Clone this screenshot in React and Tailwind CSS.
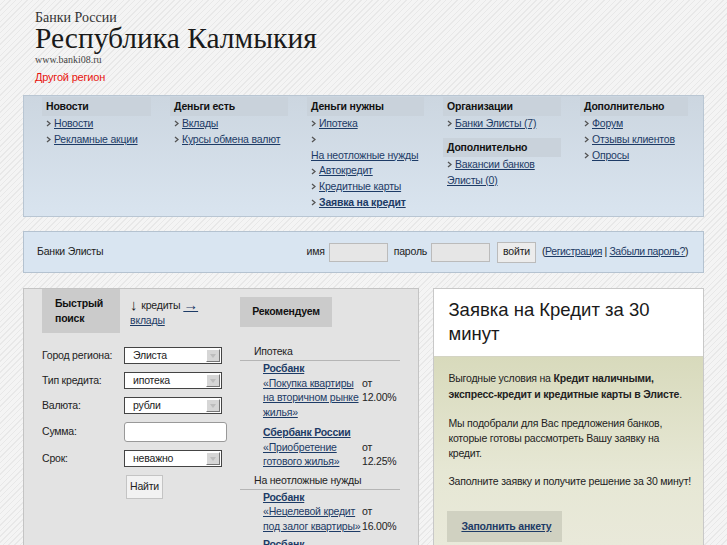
import React from 'react';

const Chev = () => (
  <svg width="5" height="7" viewBox="0 0 5 7" className="inline-block mr-[3px] mb-[1px]">
    <path d="M1 1 L4 3.5 L1 6" fill="none" stroke="#555" strokeWidth="1.3" />
  </svg>
);

const NavLink = ({ children, bold }) => (
  <div className="leading-[15.8px] whitespace-nowrap">
    <Chev />
    <a className={`underline text-[#1d3b66] ${bold ? 'font-bold' : ''}`}>{children}</a>
  </div>
);

const NavHead = ({ children }) => (
  <div className="h-[19px] bg-[#c9d2db] pl-[4px] font-bold leading-[19px] text-[#111]">{children}</div>
);

const Select = ({ value }) => (
  <div className="w-[98px] h-[17px] border border-[#444] bg-white flex items-center">
    <span className="flex-1 pl-[8px] leading-none text-[#222]">{value}</span>
    <div className="w-[14px] h-[13px] mr-[1px] bg-[#d6d6d6] border-t border-l border-white border-r border-b border-r-[#777] border-b-[#777] flex items-center justify-center">
      <svg width="6" height="4" viewBox="0 0 6 4"><path d="M0 0 L6 0 L3 4 Z" fill="#bdbdbd" /></svg>
    </div>
  </div>
);

const Offer = ({ bank, lines, rate }) => (
  <div className="pl-[23px]">
    <a className="block font-bold underline text-[#1d3b66] leading-[14.5px]">{bank}</a>
    <div className="flex">
      <div className="w-[99px]">
        {lines.map((l, i) => (
          <a key={i} className="block underline text-[#1d3b66] leading-[14.5px] whitespace-nowrap">{l}</a>
        ))}
      </div>
      <div className="leading-[14.5px] text-[#222] whitespace-nowrap">
        <div>{rate ? 'от' : ''}</div>
        <div>{rate}</div>
      </div>
    </div>
  </div>
);

export default function App() {
  return (
    <div
      className="w-[727px] h-[545px] overflow-hidden bg-[repeating-linear-gradient(135deg,#f4f4f4_0px,#f4f4f4_3px,#e8e8e8_3px,#e8e8e8_4px)] text-[10.5px] tracking-[-0.2px] text-[#222]"
      style={{ fontFamily: '"Liberation Sans", Arial, sans-serif' }}
    >
      {/* header */}
      <div className="pl-[35px] pt-[10px] tracking-normal" style={{ fontFamily: '"Liberation Serif", "Times New Roman", serif' }}>
        <div className="text-[14px] leading-[15px] text-[#333]">Банки России</div>
        <div className="text-[29.5px] leading-[26px] text-[#1a1a1a]">Республика Калмыкия</div>
        <div className="text-[10px] leading-[12px] text-[#444] mt-[3px]">www.banki08.ru</div>
      </div>
      <div className="pl-[35px] mt-[5px] text-[11px] tracking-[-0.2px] leading-[13px] text-[#e8140f]">Другой регион</div>

      {/* nav */}
      <div className="mx-[23px] w-[681px] mt-[11px] h-[122px] border border-[#b9c6d3] bg-[linear-gradient(180deg,#ccd6e0_0%,#d9e4ef_100%)] flex gap-[19px] pl-[18px] pt-[1px]">
        <div className="w-[109px]">
          <NavHead>Новости</NavHead>
          <div className="pl-[4px]">
            <NavLink>Новости</NavLink>
            <NavLink>Рекламные акции</NavLink>
          </div>
        </div>
        <div className="w-[118px]">
          <NavHead>Деньги есть</NavHead>
          <div className="pl-[4px]">
            <NavLink>Вклады</NavLink>
            <NavLink>Курсы обмена валют</NavLink>
          </div>
        </div>
        <div className="w-[117px]">
          <NavHead>Деньги нужны</NavHead>
          <div className="pl-[4px] whitespace-nowrap">
            <NavLink>Ипотека</NavLink>
            <div className="leading-[15.8px]">
              <Chev />
              <br />
              <a className="underline text-[#1d3b66]">На неотложные нужды</a>
            </div>
            <NavLink>Автокредит</NavLink>
            <NavLink>Кредитные карты</NavLink>
            <NavLink bold>Заявка на кредит</NavLink>
          </div>
        </div>
        <div className="w-[118px]">
          <NavHead>Организации</NavHead>
          <div className="pl-[4px]">
            <NavLink>Банки Элисты (7)</NavLink>
          </div>
          <div className="mt-[6px]">
            <NavHead>Дополнительно</NavHead>
          </div>
          <div className="pl-[4px]">
            <NavLink>Вакансии банков</NavLink>
            <a className="block underline text-[#1d3b66] leading-[14px]">Элисты (0)</a>
          </div>
        </div>
        <div className="w-[108px]">
          <NavHead>Дополнительно</NavHead>
          <div className="pl-[4px]">
            <NavLink>Форум</NavLink>
            <NavLink>Отзывы клиентов</NavLink>
            <NavLink>Опросы</NavLink>
          </div>
        </div>
      </div>

      {/* login bar */}
      <div className="mx-[23px] w-[681px] mt-[14px] h-[42px] border border-[#b4c2d0] bg-[#d9e5f1] flex items-center pl-[13px] pr-[15px]">
        <span className="flex-1 text-[#222]">Банки Элисты</span>
        <span className="mr-[4px]">имя</span>
        <div className="w-[59px] h-[19px] border border-[#bbb] bg-[#e6e6e6] mr-[6px]" />
        <span className="mr-[4px]">пароль</span>
        <div className="w-[59px] h-[19px] border border-[#bbb] bg-[#e6e6e6] mr-[7px]" />
        <div className="h-[21px] px-[5px] border border-[#bbb] bg-[#ececec] flex items-center mr-[6px] text-[#222]">войти</div>
        <span className="whitespace-nowrap tracking-[-0.4px]">
          (<a className="underline text-[#1d3b66]">Регистрация</a> | <a className="underline text-[#1d3b66]">Забыли пароль?</a>)
        </span>
      </div>

      {/* main */}
      <div className="flex mx-[23px] mt-[15px] gap-[14px]">
        {/* left panel */}
        <div className="w-[397px] h-[260px] border border-[#c4c4c4] bg-[#e3e3e3] pl-[18px] flex">
          <div className="w-[198px]">
            <div className="flex">
              <div className="w-[78px] h-[44px] bg-[#cbcbcb] pl-[13px] pt-[7px] font-bold leading-[15px] text-[#111]">
                Быстрый<br />поиск
              </div>
              <div className="pl-[10px] pt-[8px] leading-[16px]">
                <div className="flex items-center">
                  <span className="text-[15px] font-bold leading-[16px] mr-[4px]">↓</span>
                  <span>кредиты</span>
                  <span className="ml-[3px] text-[15px] font-bold leading-[16px] underline text-[#1d3b66]">→</span>
                </div>
                <a className="underline text-[#1d3b66] block -mt-[1px]">вклады</a>
              </div>
            </div>
            <div className="mt-[14px] flex flex-col gap-[8px]">
              <div className="flex items-center"><span className="w-[82px]">Город региона:</span><Select value="Элиста" /></div>
              <div className="flex items-center"><span className="w-[82px]">Тип кредита:</span><Select value="ипотека" /></div>
              <div className="flex items-center"><span className="w-[82px]">Валюта:</span><Select value="рубли" /></div>
              <div className="flex items-center"><span className="w-[82px]">Сумма:</span>
                <div className="w-[103px] h-[20px] border border-[#999] rounded-[3px] bg-white" />
              </div>
              <div className="flex items-center"><span className="w-[82px]">Срок:</span><Select value="неважно" /></div>
              <div className="pl-[84px]">
                <div className="w-[37px] h-[24px] border border-[#c4c4c4] bg-[#f2f2f2] flex items-center justify-center text-[#222]">Найти</div>
              </div>
            </div>
          </div>
          <div className="w-[160px]">
            <div className="mt-[8px] w-[92px] h-[30px] bg-[#cbcbcb] flex items-center justify-center font-bold text-[#111]">Рекомендуем</div>
            <div className="mt-[17px] pl-[14px] leading-[15px] text-[#222]">Ипотека</div>
            <div className="border-t border-[#b5b5b5] mt-[1px]" />
            <Offer bank="Росбанк" lines={['«Покупка квартиры', 'на вторичном рынке', 'жилья»']} rate="12.00%" />
            <div className="h-[6px]" />
            <Offer bank="Сбербанк России" lines={['«Приобретение', 'готового жилья»']} rate="12.25%" />
            <div className="mt-[4px] pl-[14px] leading-[15px] text-[#222]">На неотложные нужды</div>
            <div className="border-t border-[#b5b5b5] mt-[1px]" />
            <Offer bank="Росбанк" lines={['«Нецелевой кредит', 'под залог квартиры»']} rate="16.00%" />
            <div className="h-[4px]" />
            <Offer bank="Росбанк" lines={[]} rate="" />
          </div>
        </div>

        {/* right panel */}
        <div className="w-[271px] h-[260px] border border-[#c8c8c8] flex flex-col">
          <div className="h-[67px] bg-white pl-[14px] pt-[9px] text-[18.5px] tracking-normal leading-[24px] text-[#1a1a1a]">
            Заявка на Кредит за 30<br />минут
          </div>
          <div className="flex-1 border-t border-[#d4d4c4] bg-[linear-gradient(180deg,#d8dabc_0%,#e6e7d4_60%,#e9e9da_100%)] pl-[14px] pt-[13px] text-[#222]">
            <p className="leading-[16px]">
              Выгодные условия на <b>Кредит наличными,</b><br />
              <b>экспресс-кредит и кредитные карты в Элисте</b>.
            </p>
            <p className="leading-[15px] mt-[14px]">
              Мы подобрали для Вас предложения банков,<br />
              которые готовы рассмотреть Вашу заявку на<br />
              кредит.
            </p>
            <p className="leading-[15px] mt-[13px] whitespace-nowrap">Заполните заявку и получите решение за 30 минут!</p>
            <div className="mt-[22px] -ml-[1px] w-[115px] h-[31px] bg-[#d0d1c1] flex items-center pl-[14px]">
              <a className="font-bold underline text-[#1d3b66]">Заполнить анкету</a>
            </div>
          </div>
        </div>
      </div>
    </div>
  );
}
